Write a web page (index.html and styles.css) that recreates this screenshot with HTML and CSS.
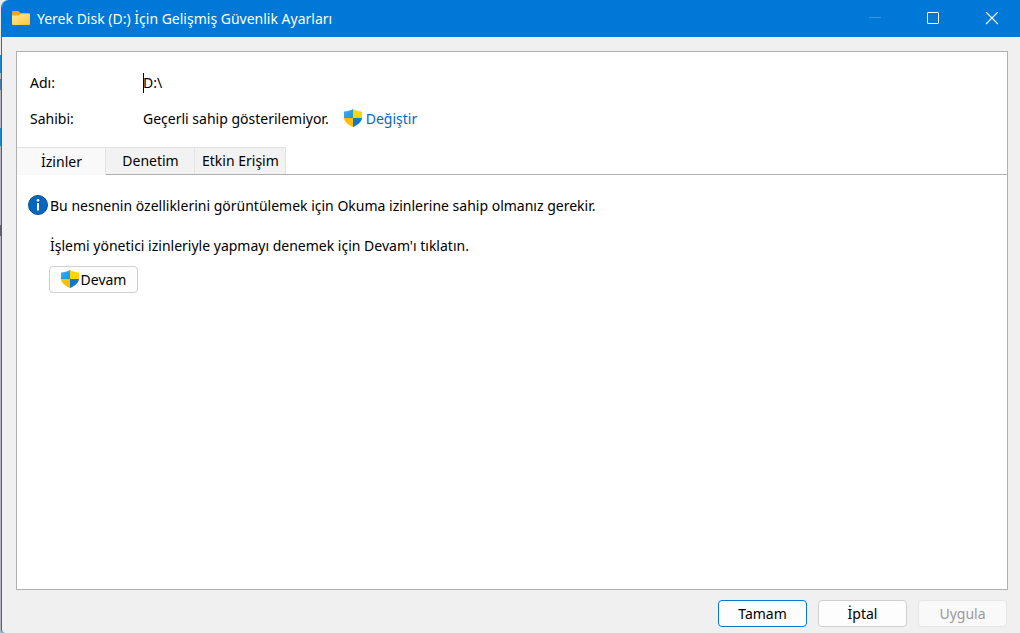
FILE: index.html
```html
<!DOCTYPE html>
<html lang="tr">
<head>
<meta charset="utf-8">
<title>Yerek Disk (D:) İçin Gelişmiş Güvenlik Ayarları</title>
<link rel="stylesheet" href="styles.css">
</head>
<body>
<svg class="defs" aria-hidden="true">
  <defs>
    <linearGradient id="folder-fill" x1="0" y1="0" x2="1" y2="1">
      <stop offset="0" stop-color="#ffe79b"/><stop offset="1" stop-color="#ffc937"/>
    </linearGradient>
    <linearGradient id="shield-blue" x1="0" y1="0" x2="1" y2="1">
      <stop offset="0" stop-color="#38b0ee"/><stop offset="1" stop-color="#1f93dc"/>
    </linearGradient>
    <symbol id="shield" viewBox="0 0 18 18">
      <path d="M9 0C6.500 1.700 3.500 2.400 0 2.400V9H9Z" fill="url(#shield-blue)"/>
      <path d="M9 0C11.500 1.700 14.500 2.400 18 2.400V9H9Z" fill="#ffd500"/>
      <path d="M0 9H9V18C4 16 .5 13 0 9Z" fill="#f9bd0a"/>
      <path d="M18 9H9V18C14 16 17.500 13 18 9Z" fill="#0f78cc"/>
    </symbol>
  </defs>
</svg>
<div class="window">
  <header class="titlebar">
    <svg class="folder" viewBox="0 0 18 14" aria-hidden="true">
      <path d="M0 1a1 1 0 0 1 1-1H6.500L8.500 2H17a1 1 0 0 1 1 1V8H0Z" fill="#f0a812"/>
      <path d="M0 4.500H6.500L8.500 3H17a1 1 0 0 1 1 1V13a1 1 0 0 1-1 1H1a1 1 0 0 1-1-1Z" fill="url(#folder-fill)"/>
    </svg>
    <h1 class="title">Yerek Disk (D:) İçin Gelişmiş Güvenlik Ayarları</h1>
    <div class="captions">
      <button class="caption" type="button" aria-label="Simge durumuna küçült" disabled><svg viewBox="0 0 14 14"><path d="M1 5.500H13" stroke="#3a97e3"/></svg></button>
      <button class="caption" type="button" aria-label="Ekranı kapla"><svg viewBox="0 0 14 14"><rect x="1.500" y="0.500" width="11" height="11" rx=".5" stroke="#fff"/></svg></button>
      <button class="caption" type="button" aria-label="Kapat"><svg viewBox="0 0 14 14"><path d="M2 0L14 12M14 0L2 12" stroke="#fff" stroke-width="1.200"/></svg></button>
    </div>
  </header>
  <main class="panel">
    <div class="fields">
      <label class="label" for="name">Adı:</label>
      <div class="value"><span class="caret"></span><input class="name" id="name" value="D:\" readonly></div>
      <span class="label">Sahibi:</span>
      <div class="value"><span>Geçerli sahip gösterilemiyor.</span><a class="change" href="#"><svg class="shield"><use href="#shield"/></svg>Değiştir</a></div>
    </div>
    <div class="tabs" role="tablist">
      <button class="tab active" type="button" role="tab" aria-selected="true">İzinler</button>
      <button class="tab" type="button" role="tab" aria-selected="false">Denetim</button>
      <button class="tab" type="button" role="tab" aria-selected="false">Etkin Erişim</button>
    </div>
    <section class="content" role="tabpanel">
      <svg class="info" viewBox="0 0 20 20" aria-hidden="true">
        <circle cx="10" cy="10" r="9.500" fill="#0067c0" stroke="#124f88"/>
        <circle cx="10" cy="5.200" r="1.300" fill="#fff"/><path d="M10 8V15.500" stroke="#fff" stroke-width="2"/>
      </svg>
      <p class="text">Bu nesnenin özelliklerini görüntülemek için Okuma izinlerine sahip olmanız gerekir.</p>
      <p class="text second">İşlemi yönetici izinleriyle yapmayı denemek için Devam'ı tıklatın.</p>
      <button class="button continue" type="button"><svg class="shield"><use href="#shield"/></svg>Devam</button>
    </section>
  </main>
  <footer class="footer">
    <button class="button primary" type="button">Tamam</button>
    <button class="button" type="button">İptal</button>
    <button class="button" type="button" disabled>Uygula</button>
  </footer>
</div>
</body>
</html>
```
FILE: styles.css
```css
* { box-sizing: border-box; }
body {
  margin: 0;
  background: linear-gradient(#e8e8e8 55px, #1a86d0 55px 73px, #b4b8bc 73px 79px, #4a78a8 79px 90px, #b4b8bc 90px 128px, #1a86d0 128px 146px, #b4b8bc 146px 225px, #606468 225px 236px, #b4b8bc 236px);
  color: #000;
  font: 14px/20px "Noto Sans", "Open Sans", sans-serif;
}
button, input { font: inherit; color: inherit; }
svg { display: block; fill: none; flex: none; }
.defs { position: absolute; width: 0; height: 0; }
.window {
  display: flex;
  flex-direction: column;
  height: 100vh;
  margin-left: 1px;
  border-left: 1px solid #0078d7;
  border-radius: 8px 0 0 4px;
  background: #f0f0f0;
  overflow: hidden;
}
.titlebar {
  display: flex;
  align-items: center;
  height: 37px;
  padding-left: 10px;
  background: #0078d7;
  color: #fff;
}
.folder { width: 18px; height: 14px; margin-bottom: 2px; }
.title { margin: 0 0 0 7px; font-size: 14px; font-weight: 400; }
.captions { display: flex; height: 100%; margin-left: auto; }
.caption {
  display: grid;
  place-items: center;
  width: 58px;
  padding: 0;
  border: 0;
  background: none;
}
.caption svg { width: 14px; height: 14px; }
.panel {
  display: flex;
  flex-direction: column;
  flex: 1;
  margin: 14px 12px 0 14px;
  border: 1px solid #b0b0b0;
  background: #fff;
}
.fields {
  display: grid;
  grid-template-columns: 113px 1fr;
  row-gap: 16px;
  padding: 21px 13px 18px;
}
.value { display: flex; align-items: center; height: 20px; }
.caret { width: 1px; height: 20px; margin-right: -1px; background: #000; }
.name { width: 100%; padding: 0; border: 0; background: none; outline: 0; }
.change {
  display: flex;
  align-items: center;
  gap: 4px;
  margin-left: 15px;
  color: #0066cc;
  text-decoration: none;
}
.shield { width: 18px; height: 18px; margin-bottom: 2px; }
.tabs { display: flex; height: 28px; border-bottom: 1px solid #b0b0b0; }
.tab {
  padding: 0 6px 0 7px;
  border: 1px solid #e2e2e2;
  border-width: 1px 1px 0 0;
  background: #f2f2f2;
}
.tab:nth-child(2) { width: 89px; }
.tab.active {
  width: 89px;
  height: 28px;
  background: #f9f9f9;
}
.content {
  display: grid;
  grid-template-columns: 20px 1fr;
  column-gap: 2px;
  align-items: end;
  justify-items: start;
  padding: 20px 11px;
}
.info { width: 20px; height: 20px; margin-bottom: 1px; }
.text { margin: 0; }
.second { grid-column: 2; margin-top: 20px; }
.button {
  display: flex;
  align-items: center;
  justify-content: center;
  gap: 2px;
  width: 89px;
  height: 27px;
  padding: 0;
  border: 1px solid #d0d0d0;
  border-radius: 4px;
  background: #fdfdfd;
}
.continue { grid-column: 2; margin: 10px 0 0 -1px; }
.primary { border-color: #0078d4; }
.button:disabled { border-color: #e6e6e6; background: #f9f9f9; color: #9a9a9a; }
.footer {
  display: flex;
  justify-content: flex-end;
  gap: 11px;
  padding: 10px 13px 6px;
}
```
